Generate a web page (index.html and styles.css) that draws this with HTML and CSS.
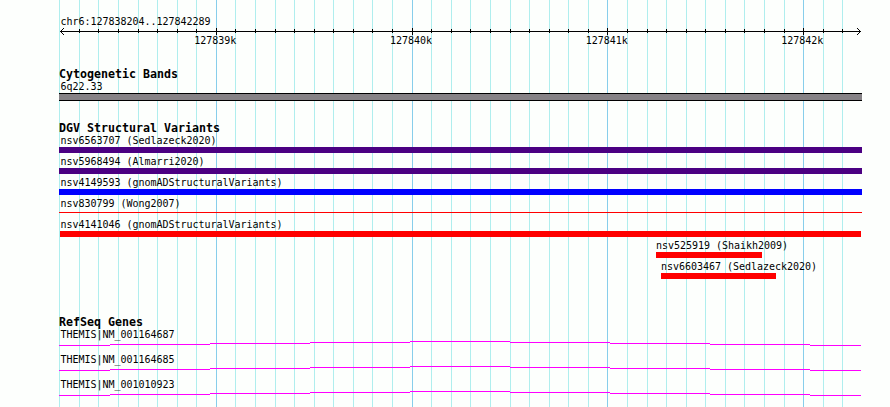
FILE: index.html
```
<!DOCTYPE html>
<html lang="en">
<head>
    <meta charset="UTF-8">
    <title>chr6:127838204..127842289</title>
    <link rel="stylesheet" href="styles.css">
</head>
<body>

    <div class="browser">
        <svg class="grid" width="890" height="407" shape-rendering="crispEdges">
            <path class="minor" d="M59.5 0V407M79.5 0V407M98.5 0V407M118.5 0V407M138.5 0V407M157.5 0V407M177.5 0V407M196.5 0V407M235.5 0V407M255.5 0V407M275.5 0V407M294.5 0V407M314.5 0V407M333.5 0V407M353.5 0V407M372.5 0V407M392.5 0V407M431.5 0V407M451.5 0V407M470.5 0V407M490.5 0V407M510.5 0V407M529.5 0V407M549.5 0V407M568.5 0V407M588.5 0V407M627.5 0V407M647.5 0V407M666.5 0V407M686.5 0V407M705.5 0V407M725.5 0V407M744.5 0V407M764.5 0V407M784.5 0V407M823.5 0V407M842.5 0V407"/>
            <path class="major" d="M216.5 0V407M412.5 0V407M607.5 0V407M803.5 0V407"/>
        </svg>

        <div class="ruler">
            <div class="label">chr6:127838204..127842289</div>
            <svg class="axis" width="803" height="9" shape-rendering="crispEdges">
                <path d="M1 4.5H802"/>
                <path d="M20.5 2V6M39.5 2V6M59.5 2V6M79.5 2V6M98.5 2V6M118.5 2V6M137.5 2V6M176.5 2V6M196.5 2V6M216.5 2V6M235.5 2V6M255.5 2V6M274.5 2V6M294.5 2V6M313.5 2V6M333.5 2V6M372.5 2V6M392.5 2V6M411.5 2V6M431.5 2V6M451.5 2V6M470.5 2V6M490.5 2V6M509.5 2V6M529.5 2V6M568.5 2V6M588.5 2V6M607.5 2V6M627.5 2V6M646.5 2V6M666.5 2V6M685.5 2V6M705.5 2V6M725.5 2V6M764.5 2V6M783.5 2V6"/>
                <path d="M157.5 1V8M353.5 1V8M548.5 1V8M744.5 1V8"/>
                <path d="M2 3.5H3M3 2.5H4M4 1.5H5M2 5.5H3M3 6.5H4M4 7.5H5M800 3.5H801M799 2.5H800M798 1.5H799M800 5.5H801M799 6.5H800M798 7.5H799"/>
            </svg>
            <div class="ticks">
                <span>127839k</span>
                <span>127840k</span>
                <span>127841k</span>
                <span>127842k</span>
            </div>
        </div>

        <div class="track bands">
            <h2>Cytogenetic Bands</h2>
            <div class="label">6q22.33</div>
            <div class="band"></div>
        </div>

        <div class="track variants">
            <h2>DGV Structural Variants</h2>
            <div class="variant">
                <div class="label">nsv6563707 (Sedlazeck2020)</div>
                <div class="bar indigo"></div>
            </div>
            <div class="variant">
                <div class="label">nsv5968494 (Almarri2020)</div>
                <div class="bar indigo"></div>
            </div>
            <div class="variant">
                <div class="label">nsv4149593 (gnomADStructuralVariants)</div>
                <div class="bar blue"></div>
            </div>
            <div class="variant">
                <div class="label">nsv830799 (Wong2007)</div>
                <div class="bar red thin"></div>
            </div>
            <div class="variant">
                <div class="label">nsv4141046 (gnomADStructuralVariants)</div>
                <div class="bar red inset"></div>
            </div>
            <div class="variant shaikh">
                <div class="label">nsv525919 (Shaikh2009)</div>
                <div class="bar red"></div>
            </div>
            <div class="variant sedlazeck">
                <div class="label">nsv6603467 (Sedlazeck2020)</div>
                <div class="bar red"></div>
            </div>
        </div>

        <div class="track genes">
            <h2>RefSeq Genes</h2>
            <div class="gene">
                <div class="label">THEMIS|NM_001164687</div>
                <svg class="intron" width="803" height="5" shape-rendering="crispEdges">
                    <path d="M0 4.5H51M51 3.5H151M151 2.5H251M251 1.5H351M351 .5H451M451 1.5H551M551 2.5H651M651 3.5H751M751 4.5H802"/>
                </svg>
            </div>
            <div class="gene">
                <div class="label">THEMIS|NM_001164685</div>
                <svg class="intron" width="803" height="5" shape-rendering="crispEdges">
                    <path d="M0 4.5H51M51 3.5H151M151 2.5H251M251 1.5H351M351 .5H451M451 1.5H551M551 2.5H651M651 3.5H751M751 4.5H802"/>
                </svg>
            </div>
            <div class="gene">
                <div class="label">THEMIS|NM_001010923</div>
                <svg class="intron" width="803" height="5" shape-rendering="crispEdges">
                    <path d="M0 4.5H51M51 3.5H151M151 2.5H251M251 1.5H351M351 .5H451M451 1.5H551M551 2.5H651M651 3.5H751M751 4.5H802"/>
                </svg>
            </div>
        </div>
    </div>

</body>
</html>
```

FILE: styles.css
```
* {
    margin: 0;
    padding: 0;
    box-sizing: border-box;
}

body {
    background: #fdfffd;
    color: #000;
    font-family: "DejaVu Sans Mono", "Liberation Mono", monospace;
    font-size: 10px;
    line-height: 12px;
}

.browser {
    position: relative;
    width: 890px;
    height: 407px;
    padding: 15px 28px 0 59px;
    overflow: hidden;
}

/* grid lines run behind every track */
.grid {
    position: absolute;
    left: 0;
    top: 0;
    z-index: -1;
}

.grid path,
.axis path,
.intron path {
    fill: none;
    stroke-width: 1px;
}

.grid .minor {
    stroke: #afeeee;
}

.grid .major {
    stroke: #87ceeb;
}

.axis path {
    stroke: #000;
}

.intron path {
    stroke: #f0f;
}

svg {
    display: block;
}

.label {
    height: 12px;
    padding-left: 1.4px;
    line-height: 14px;
    letter-spacing: -0.02px;
    white-space: nowrap;
}

h2 {
    height: 12px;
    font-size: 11.63px;
    line-height: 12px;
    font-weight: bold;
    white-space: nowrap;
}

.ruler {
    height: 53px;
}

.ticks {
    display: flex;
    gap: 153.7px;
    margin-top: -1px;
    padding-left: 135.3px;
}

.ticks span {
    width: 42px;
    letter-spacing: -0.02px;
    white-space: nowrap;
}

.bands {
    height: 54px;
}

.band {
    height: 8px;
    margin-top: 1px;
    background: #868286;
    border-top: 1px solid #000;
    border-bottom: 1px solid #000;
}

.variants {
    height: 194px;
}

.variant {
    height: 21px;
}

.bar {
    height: 6px;
    margin-top: 1px;
}

.indigo {
    background: #4b0082;
}

.blue {
    background: #00f;
}

.red {
    background: #f00;
}

.thin {
    height: 1px;
    margin-top: 3px;
}

.inset {
    margin-left: 1px;
    margin-right: 1px;
}

.shaikh {
    width: 106px;
    margin-left: 597px;
}

.sedlazeck {
    width: 115px;
    margin-left: 602px;
}

.shaikh .label,
.sedlazeck .label {
    padding-left: 0;
}

.gene {
    height: 25px;
}

.intron {
    margin-top: 1px;
}
```
